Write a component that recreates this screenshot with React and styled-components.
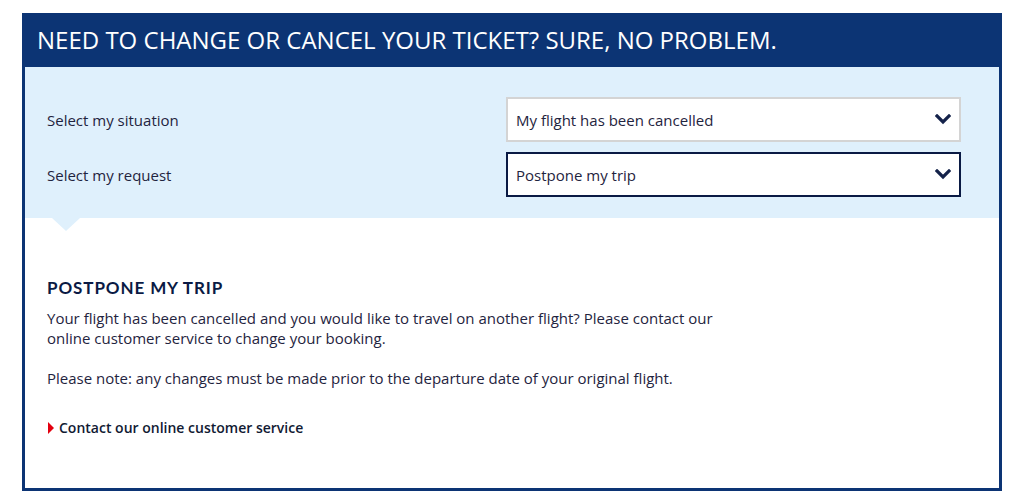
import React from "react";
import styled, { createGlobalStyle } from "styled-components";

const GlobalStyle = createGlobalStyle`
  body {
    margin: 0;
    background: #ffffff;
    font-family: "Open Sans", "Liberation Sans", sans-serif;
  }
`;

const Page = styled.div`
  padding: 13px 0 0 22px;
`;

const Card = styled.section`
  width: 980px;
  height: 478px;
  box-sizing: border-box;
  border: 3px solid #0c3474;
  border-top: none;
  display: flex;
  flex-direction: column;
`;

const Header = styled.h1`
  position: relative;
  margin: 0 -3px;
  height: 54px;
  padding: 0 15px;
  background: #0c3474;
  color: #ffffff;
  font-size: 24px;
  font-weight: 400;
  line-height: 53px;

  &::after {
    content: "";
    position: absolute;
    left: 30px;
    bottom: -11px;
    border-left: 12px solid transparent;
    border-right: 12px solid transparent;
    border-top: 11px solid #0c3474;
  }
`;

const Options = styled.div`
  position: relative;
  background: #dff0fc;
  padding: 30px 38px 21px 22px;
  display: flex;
  flex-direction: column;
  gap: 10px;

  &::after {
    content: "";
    position: absolute;
    left: 27px;
    bottom: -13px;
    border-left: 14px solid transparent;
    border-right: 14px solid transparent;
    border-top: 13px solid #dff0fc;
  }
`;

const Row = styled.div`
  display: flex;
  align-items: center;
  justify-content: space-between;
`;

const Label = styled.span`
  font-size: 15px;
  color: #1f2440;
`;

const Select = styled.div`
  width: 455px;
  height: 45px;
  box-sizing: border-box;
  background: #ffffff;
  border: 2px solid ${(p) => (p.$active ? "#0a1a44" : "#d4d4d4")};
  display: flex;
  align-items: center;
  justify-content: space-between;
  padding: 0 8px;
  font-size: 15px;
  color: #1f2440;
`;

const Chevron = () => (
  <svg width="16" height="11" viewBox="0 0 16 11">
    <path
      d="M2 2 L8 8 L14 2"
      fill="none"
      stroke="#14224a"
      strokeWidth="3.2"
      strokeLinecap="square"
    />
  </svg>
);

const Content = styled.div`
  padding: 59px 22px 0;
  color: #1f2440;
`;

const Title = styled.h2`
  margin: 0 0 10px;
  font-family: "Lato", "Open Sans", sans-serif;
  font-size: 17px;
  font-weight: 700;
  letter-spacing: 0.9px;
  color: #0a1a44;
`;

const Text = styled.p`
  margin: 0 0 20px;
  max-width: 690px;
  font-size: 15px;
  line-height: 20px;
`;

const LinkLine = styled.a`
  display: flex;
  align-items: center;
  gap: 5px;
  margin-top: 30px;
  font-size: 14px;
  font-weight: 600;
  color: #111a33;
  text-decoration: none;

  &::before {
    content: "";
    border-top: 6px solid transparent;
    border-bottom: 6px solid transparent;
    border-left: 6px solid #e3000f;
    margin-left: 1px;
  }
`;

export default function App() {
  return (
    <>
      <GlobalStyle />
      <Page>
        <Card>
          <Header>NEED TO CHANGE OR CANCEL YOUR TICKET? SURE, NO PROBLEM.</Header>
          <Options>
            <Row>
              <Label>Select my situation</Label>
              <Select>
                My flight has been cancelled
                <Chevron />
              </Select>
            </Row>
            <Row>
              <Label>Select my request</Label>
              <Select $active>
                Postpone my trip
                <Chevron />
              </Select>
            </Row>
          </Options>
          <Content>
            <Title>POSTPONE MY TRIP</Title>
            <Text>
              Your flight has been cancelled and you would like to travel on another flight? Please contact our
              online customer service to change your booking.
            </Text>
            <Text>Please note: any changes must be made prior to the departure date of your original flight.</Text>
            <LinkLine href="#">Contact our online customer service</LinkLine>
          </Content>
        </Card>
      </Page>
    </>
  );
}
